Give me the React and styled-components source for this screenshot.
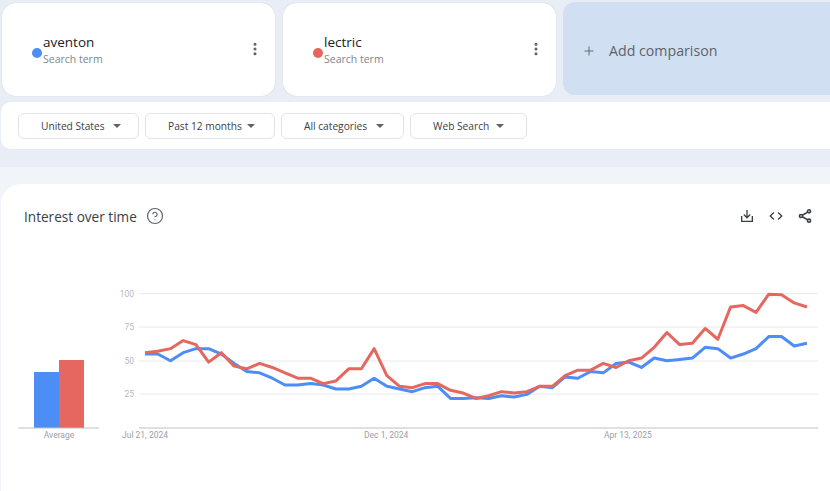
import styled, { createGlobalStyle } from "styled-components";
import { Plus, MoreVertical, HelpCircle } from "lucide-react";

const GlobalStyle = createGlobalStyle`
  html, body {
    margin: 0;
    padding: 0;
    width: 830px;
    height: 491px;
    overflow: hidden;
    background: #f1f4f9;
    font-family: "Open Sans", "Noto Sans", sans-serif;
  }
`;

const BLUE = "#4c8df6";
const RED = "#e5675f";

const aventon = [
  55, 55, 50, 56, 59, 59, 55, 48, 42, 41, 37, 32, 32, 33, 32, 29, 29, 31, 37, 31, 29, 27, 30, 31, 22, 22,
  22.5, 22, 24, 23, 25, 31, 30, 38, 37, 42, 41, 48, 49, 45, 52, 50, 51, 52, 60, 59, 52, 55, 59, 68, 68, 61, 63,
];
const lectric = [
  56, 57, 59, 65, 62, 49, 56, 46, 44, 48, 45, 41, 37, 37, 33, 35, 44, 44, 59, 39, 31, 30, 33, 33, 28, 26,
  22, 24, 27, 26, 27, 31, 31, 39, 43, 43, 48, 45, 50, 52, 60, 71, 62, 63, 74, 66, 90, 91, 86, 99.5, 99, 93, 90,
];

const Page = styled.div`
  width: 830px;
  height: 491px;
  overflow: hidden;
  position: relative;
`;

const TopBand = styled.div`
  height: 167px;
  box-sizing: border-box;
  padding: 2px 0 0 2px;
  background: #e9eef6;
`;

const TermRow = styled.div`
  display: flex;
  gap: 7px;
  height: 94px;
  width: 900px;
`;

const TermCard = styled.div`
  box-sizing: border-box;
  width: 273px;
  height: 93px;
  margin-top: 1px;
  padding: 0 12px 0 30px;
  display: flex;
  align-items: center;
  background: #fff;
  border-radius: 14px;
  box-shadow: 0 0 1px rgba(60, 64, 67, 0.25);

  & + & {
    margin-left: 1px;
  }
`;

const Dot = styled.span`
  width: 10px;
  height: 10px;
  border-radius: 50%;
  margin: 6px 1px 0 0;
  flex: none;
  background: ${(props) => props.color};
`;

const TermText = styled.div`
  flex: 1;
  display: flex;
  flex-direction: column;
`;

const TermName = styled.span`
  font-size: 13.5px;
  line-height: 18px;
  color: #202124;
`;

const TermKind = styled.span`
  font-size: 10.5px;
  line-height: 16px;
  color: #80868b;
`;

const KebabIcon = styled(MoreVertical)`
  width: 16px;
  height: 16px;
  color: #5f6368;
  margin: -2px 0 0 0;
  stroke-width: 2.6;
`;

const AddCard = styled.div`
  box-sizing: border-box;
  width: 300px;
  height: 93px;
  padding: 4px 0 0 19px;
  display: flex;
  align-items: center;
  gap: 13px;
  background: #d0dff2;
  border-radius: 12px;
  color: #5f6368;
  font-size: 14.2px;
  font-weight: 500;
`;

const FilterBar = styled.div`
  box-sizing: border-box;
  width: 860px;
  height: 47px;
  margin: 6px 0 0 -1px;
  padding: 11px 0 0 17px;
  display: flex;
  gap: 6px;
  background: #fff;
  border-radius: 10px;
`;

const Chip = styled.div`
  box-sizing: border-box;
  width: ${(props) => props.width}px;
  height: 26px;
  padding-left: 22px;
  display: flex;
  align-items: center;
  gap: ${(props) => props.caretGap}px;
  background: #fff;
  border: 1px solid #e0e3e7;
  border-radius: 6px;
  color: #3c4043;
  font-size: 10.2px;
`;

const Caret = styled.span`
  width: 0;
  height: 0;
  border-left: 4px solid transparent;
  border-right: 4px solid transparent;
  border-top: 4px solid #5f6368;
`;

const ChartCard = styled.section`
  box-sizing: border-box;
  width: 860px;
  height: 330px;
  margin: 17px 0 0 1px;
  background: #fff;
  border-radius: 20px;
`;

const ChartHeader = styled.header`
  box-sizing: border-box;
  width: 829px;
  height: 50px;
  padding: 14px 17px 0 23px;
  display: flex;
  align-items: center;
  color: #3c4043;
`;

const ChartTitle = styled.h2`
  margin: 0 9px 0 0;
  font-size: 13.6px;
  font-weight: 400;
`;

const HelpIcon = styled(HelpCircle)`
  width: 18px;
  height: 18px;
  color: #5f6368;
  stroke-width: 1.6;
`;

const Actions = styled.div`
  margin-left: auto;
  display: flex;
  align-items: center;
  gap: 13px;
`;

const ChartRow = styled.div`
  display: flex;
  margin-top: 45px;
`;

const ChartSvg = styled.svg`
  display: block;
  flex: none;
  overflow: visible;

  text {
    font-family: Roboto, "Liberation Sans", sans-serif;
    font-size: 8.5px;
    fill: #9aa0a6;
  }
`;

const AxisLabel = styled.text`
  && {
    fill: #b4b8bd;
  }
`;

function toPoints(values) {
  // 100 sits at y=14.5 and 0 at y=149 inside the plot svg
  return values.map((v, i) => `${35 + i * 12.73},${149 - v * 1.345}`).join(" ");
}

function AverageChart() {
  return (
    <ChartSvg width="109" height="170" viewBox="0 0 109 170">
      <rect x="33" y="93" width="25" height="56" fill={BLUE} />
      <rect x="58" y="81" width="25" height="68" fill={RED} />
      <line x1="17" x2="98" y1="149" y2="149" stroke="#bdc1c6" />
      <text x="58" y="159" textAnchor="middle">
        Average
      </text>
    </ChartSvg>
  );
}

function TimeChart() {
  const grid = [
    { label: "100", y: 14.5 },
    { label: "75", y: 48 },
    { label: "50", y: 82 },
    { label: "25", y: 115 },
  ];

  return (
    <ChartSvg width="720" height="170" viewBox="0 0 720 170">
      {grid.map((g) => (
        <g key={g.label}>
          <line x1="29" x2="708" y1={g.y} y2={g.y} stroke="#e8eaed" />
          <AxisLabel x="24" y={g.y + 3} textAnchor="end">
            {g.label}
          </AxisLabel>
        </g>
      ))}
      <line x1="29" x2="708" y1="149" y2="149" stroke="#bdc1c6" />
      <text x="12" y="159">Jul 21, 2024</text>
      <text x="254" y="159">Dec 1, 2024</text>
      <text x="494" y="159">Apr 13, 2025</text>
      <polyline points={toPoints(aventon)} fill="none" stroke={BLUE} strokeWidth="3" strokeLinejoin="round" />
      <polyline points={toPoints(lectric)} fill="none" stroke={RED} strokeWidth="3" strokeLinejoin="round" />
    </ChartSvg>
  );
}

function DownloadGlyph() {
  return (
    <svg width="16" height="16" viewBox="0 0 24 24" fill="#3c4043">
      <path d="M19 12v7H5v-7H3v9h18v-9h-2z" />
      <path d="M13 3h-2v9.2L7.9 9.1 6.5 10.5 12 16l5.500-5.500-1.400-1.400-3.100 3.100z" />
    </svg>
  );
}

function EmbedGlyph() {
  return (
    <svg width="16" height="16" viewBox="0 0 24 24" fill="#3c4043">
      <path d="M9.400 16.600 4.800 12l4.600-4.600L8 6l-6 6 6 6 1.400-1.400z" />
      <path d="m14.600 16.600 4.600-4.600-4.600-4.600L16 6l6 6-6 6-1.400-1.400z" />
    </svg>
  );
}

function ShareGlyph() {
  return (
    <svg width="16" height="16" viewBox="0 0 24 24" fill="none" stroke="#3c4043" strokeWidth="2.4">
      <circle cx="18" cy="5" r="2.300" />
      <circle cx="6" cy="12" r="2.300" />
      <circle cx="18" cy="19" r="2.300" />
      <path d="m8 10.800 8-4.600M8 13.200l8 4.600" />
    </svg>
  );
}

function Term({ name, color }) {
  return (
    <TermCard>
      <Dot color={color} />
      <TermText>
        <TermName>{name}</TermName>
        <TermKind>Search term</TermKind>
      </TermText>
      <KebabIcon />
    </TermCard>
  );
}

export default function App() {
  return (
    <Page>
      <GlobalStyle />
      <TopBand>
        <TermRow>
          <Term name="aventon" color={BLUE} />
          <Term name="lectric" color={RED} />
          <AddCard>
            <Plus size={14} strokeWidth={1.6} />
            Add comparison
          </AddCard>
        </TermRow>
        <FilterBar>
          <Chip width={121} caretGap={8}>
            United States
            <Caret />
          </Chip>
          <Chip width={130} caretGap={5}>
            Past 12 months
            <Caret />
          </Chip>
          <Chip width={123} caretGap={9}>
            All categories
            <Caret />
          </Chip>
          <Chip width={117} caretGap={7}>
            Web Search
            <Caret />
          </Chip>
        </FilterBar>
      </TopBand>
      <ChartCard>
        <ChartHeader>
          <ChartTitle>Interest over time</ChartTitle>
          <HelpIcon />
          <Actions>
            <DownloadGlyph />
            <EmbedGlyph />
            <ShareGlyph />
          </Actions>
        </ChartHeader>
        <ChartRow>
          <AverageChart />
          <TimeChart />
        </ChartRow>
      </ChartCard>
    </Page>
  );
}
